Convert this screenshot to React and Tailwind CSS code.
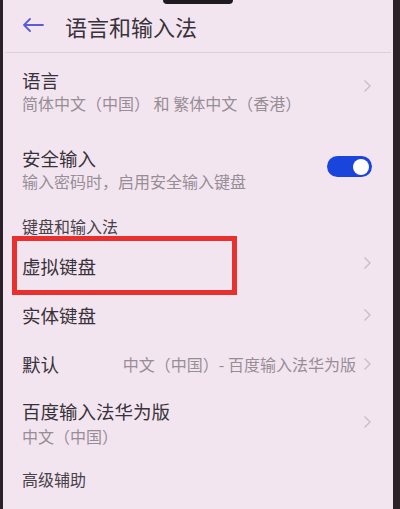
import React from 'react';

const font = { fontFamily: '"Noto Sans CJK SC", "Noto Sans", sans-serif' };

function Chevron() {
  return (
    <svg width="9" height="14" viewBox="0 0 9 14" className="shrink-0">
      <polyline points="1.5,1.5 7,7 1.5,12.5" fill="none" stroke="#c9bcc6" strokeWidth="1.4" />
    </svg>
  );
}

function Toggle() {
  return (
    <div className="w-[45px] h-[21px] rounded-full bg-[#1a45dd] flex items-center justify-end pr-[3px]">
      <div className="w-[16px] h-[16px] rounded-full bg-white" />
    </div>
  );
}

export default function App() {
  return (
    <div className="relative w-[400px] h-[509px] overflow-hidden flex bg-[#2a2228]" style={font}>
      {/* phone bezel left */}
      <div className="w-[3px] shrink-0 bg-[#2a2228]" />

      <div className="flex-1 bg-[#f3e5f0] flex flex-col">
        {/* header */}
        <div className="h-[53px] flex items-center pl-[19px] mx-[2px] border-b border-[#ddcfda]">
          <svg width="22" height="14" viewBox="0 0 22 14" className="mt-[-2px] ml-[-2px]">
            <path d="M21 7H2M8 1L2 7l6 6" fill="none" stroke="#5b5ed2" strokeWidth="1.8" strokeLinecap="round" strokeLinejoin="round" />
          </svg>
          <span className="ml-[21px] text-[22px] leading-[28px] text-[#38323a]">语言和输入法</span>
        </div>

        <div className="flex flex-col pl-[19px] pr-[21px]">
          {/* 语言 */}
          <div className="flex items-center pt-[16px] pb-[17px]">
            <div className="flex-1 flex flex-col">
              <span className="text-[18.5px] leading-[22px] text-[#38323a]">语言</span>
              <span className="mt-[1px] text-[16px] leading-[22px] text-[#978d95]">简体中文（中国） 和 繁体中文（香港）</span>
            </div>
            <div className="mt-[-12px]"><Chevron /></div>
          </div>

          {/* 安全输入 */}
          <div className="flex items-center pt-[16px]">
            <div className="flex-1 flex flex-col">
              <span className="text-[18.5px] leading-[22px] text-[#38323a]">安全输入</span>
              <span className="mt-[1px] text-[16px] leading-[22px] text-[#978d95]">输入密码时，启用安全输入键盘</span>
            </div>
            <div className="mt-[-6px]"><Toggle /></div>
          </div>

          {/* section */}
          <div className="mt-[24px] text-[16px] leading-[20px] text-[#48414a]">键盘和输入法</div>

          {/* 虚拟键盘 */}
          <div className="relative h-[60px] flex items-center">
            <span className="flex-1 text-[18.5px] leading-[22px] text-[#38323a]">虚拟键盘</span>
            <div className="mt-[-6px]"><Chevron /></div>
            <div className="absolute left-[-10px] top-0 w-[225px] h-[59px] border-[5px] border-[#e8312e]" />
          </div>

          {/* 实体键盘 */}
          <div className="h-[38px] flex items-center">
            <span className="flex-1 text-[18.5px] leading-[22px] text-[#38323a]">实体键盘</span>
            <Chevron />
          </div>

          {/* 默认 */}
          <div className="h-[49px] flex items-center pt-[11px]">
            <span className="flex-1 text-[18.5px] leading-[22px] text-[#38323a]">默认</span>
            <span className="text-[16px] leading-[22px] text-[#978d95] mr-[7px]">中文（中国）- 百度输入法华为版</span>
            <Chevron />
          </div>

          {/* 百度输入法华为版 */}
          <div className="flex items-center pt-[17px]">
            <div className="flex-1 flex flex-col">
              <span className="text-[18.5px] leading-[22px] text-[#38323a]">百度输入法华为版</span>
              <span className="mt-[3px] text-[16px] leading-[22px] text-[#978d95]">中文（中国）</span>
            </div>
            <div className="mt-[-4px]"><Chevron /></div>
          </div>

          {/* section */}
          <div className="mt-[22px] text-[16px] leading-[20px] text-[#48414a]">高级辅助</div>
        </div>
      </div>

      {/* phone bezel right */}
      <div className="w-[7px] shrink-0 bg-[#2a2228]" />

      {/* notch */}
      <div className="absolute top-0 left-[163px] w-[70px] h-[4px] rounded-b-full bg-[#1f1a1e]" />
    </div>
  );
}
